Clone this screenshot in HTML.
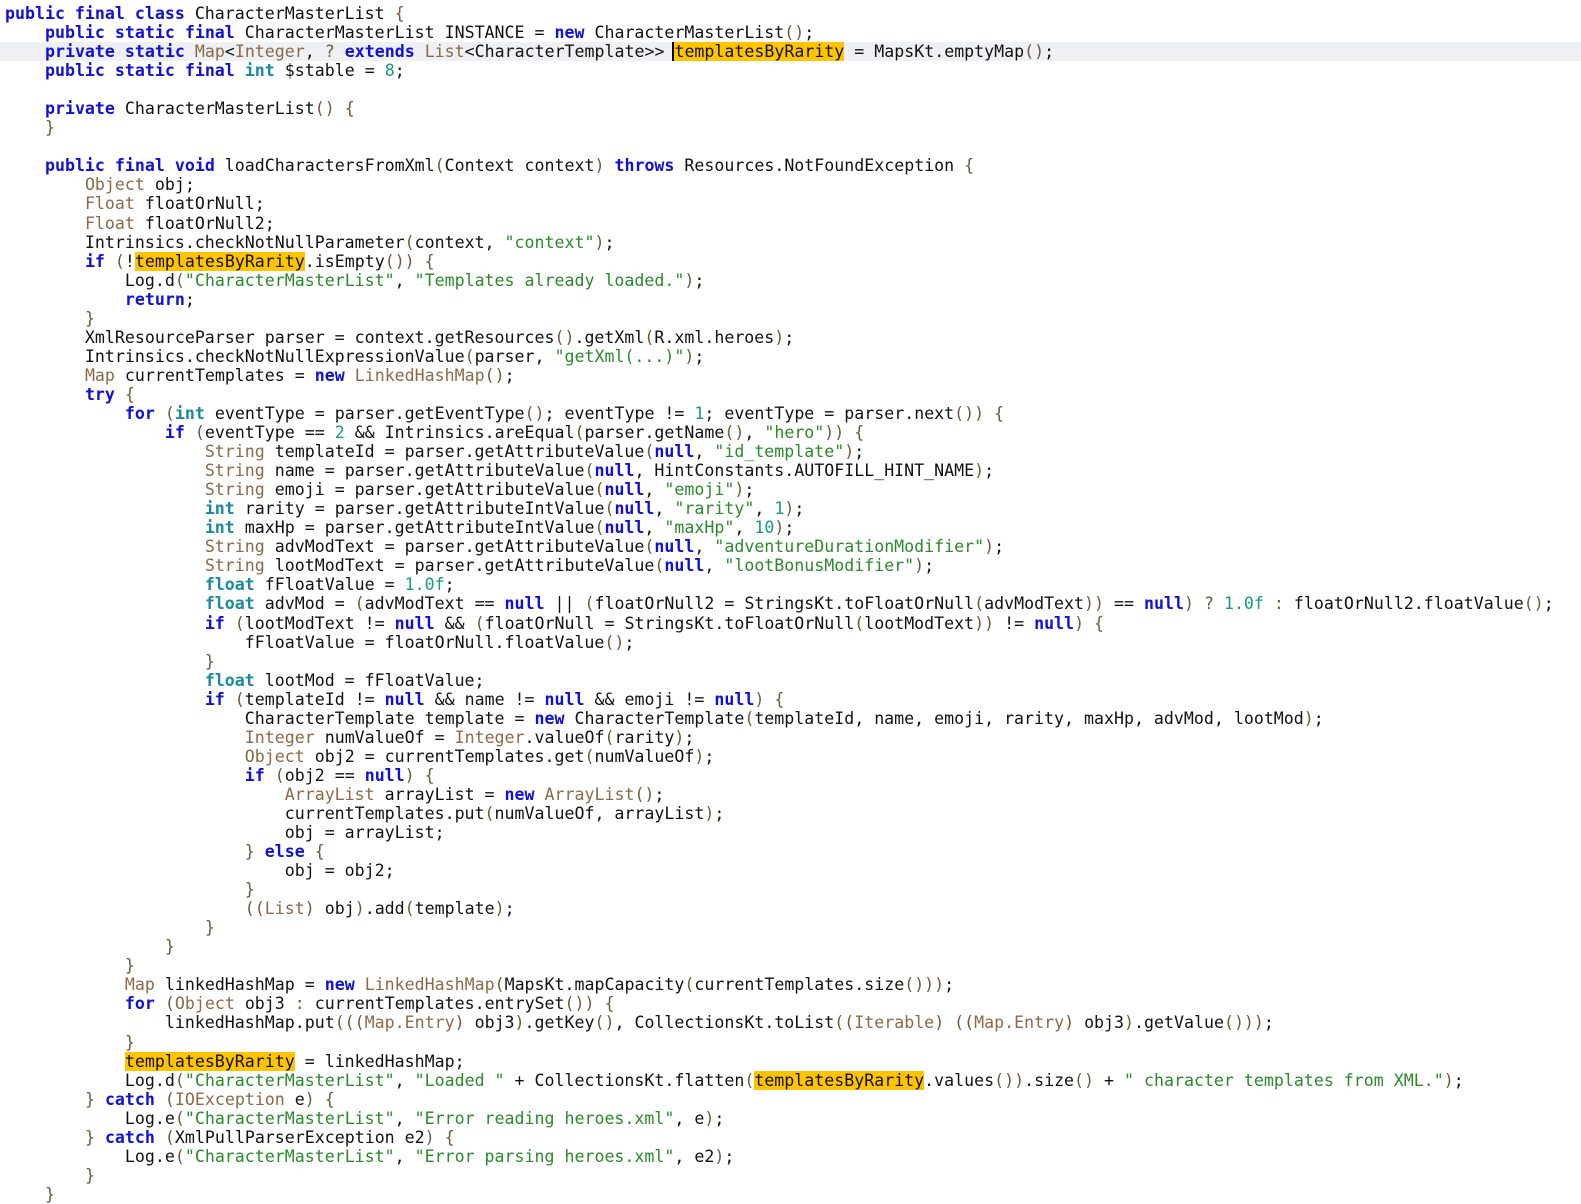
<!DOCTYPE html>
<html><head><meta charset="utf-8"><style>
html,body{margin:0;padding:0;background:#fff;width:1581px;height:1204px;overflow:hidden}
pre{margin:0;padding:4px 0 0 5px;font-family:"DejaVu Sans Mono","Liberation Mono",monospace;font-size:16.6px;line-height:19.04px;color:#111;white-space:pre}
.k{color:#1010d8;font-weight:bold}
.i{color:#1a8aa0;font-weight:bold}
.t{color:#8a6a48}
.s{color:#2a8a2a}
.n{color:#169a86}
.p{color:#6a5a40}
.h{background:#ffc400}
.cur{display:block;background:#eef0f3;margin-left:-5px;padding-left:5px;width:1600px}
.c{border-left:2px solid #000;margin-left:-2px}
</style></head><body><pre><span class="k">public final class</span> CharacterMasterList <span class="p">{</span>
    <span class="k">public static final</span> CharacterMasterList INSTANCE = <span class="k">new</span> CharacterMasterList<span class="p">()</span>;
<span class="cur">    <span class="k">private static</span> <span class="t">Map</span>&lt;<span class="t">Integer</span>, <span class="p">?</span> <span class="k">extends</span> <span class="t">List</span>&lt;CharacterTemplate&gt;&gt; <span class="h c">templatesByRarity</span> = MapsKt.emptyMap<span class="p">()</span>;</span>    <span class="k">public static final</span> <span class="i">int</span> $stable = <span class="n">8</span>;

    <span class="k">private</span> CharacterMasterList<span class="p">() {</span>
    <span class="p">}</span>

    <span class="k">public final void</span> loadCharactersFromXml<span class="p">(</span>Context context<span class="p">)</span> <span class="k">throws</span> Resources.NotFoundException <span class="p">{</span>
        <span class="t">Object</span> obj;
        <span class="t">Float</span> floatOrNull;
        <span class="t">Float</span> floatOrNull2;
        Intrinsics.checkNotNullParameter<span class="p">(</span>context, <span class="s">"context"</span><span class="p">)</span>;
        <span class="k">if</span> <span class="p">(</span>!<span class="h">templatesByRarity</span>.isEmpty<span class="p">()) {</span>
            Log.d<span class="p">(</span><span class="s">"CharacterMasterList"</span>, <span class="s">"Templates already loaded."</span><span class="p">)</span>;
            <span class="k">return</span>;
        <span class="p">}</span>
        XmlResourceParser parser = context.getResources<span class="p">()</span>.getXml<span class="p">(</span>R.xml.heroes<span class="p">)</span>;
        Intrinsics.checkNotNullExpressionValue<span class="p">(</span>parser, <span class="s">"getXml(...)"</span><span class="p">)</span>;
        <span class="t">Map</span> currentTemplates = <span class="k">new</span> <span class="t">LinkedHashMap</span><span class="p">()</span>;
        <span class="k">try</span> <span class="p">{</span>
            <span class="k">for</span> <span class="p">(</span><span class="i">int</span> eventType = parser.getEventType<span class="p">()</span>; eventType != <span class="n">1</span>; eventType = parser.next<span class="p">()) {</span>
                <span class="k">if</span> <span class="p">(</span>eventType == <span class="n">2</span> &amp;&amp; Intrinsics.areEqual<span class="p">(</span>parser.getName<span class="p">()</span>, <span class="s">"hero"</span><span class="p">)) {</span>
                    <span class="t">String</span> templateId = parser.getAttributeValue<span class="p">(</span><span class="k">null</span>, <span class="s">"id_template"</span><span class="p">)</span>;
                    <span class="t">String</span> name = parser.getAttributeValue<span class="p">(</span><span class="k">null</span>, HintConstants.AUTOFILL_HINT_NAME<span class="p">)</span>;
                    <span class="t">String</span> emoji = parser.getAttributeValue<span class="p">(</span><span class="k">null</span>, <span class="s">"emoji"</span><span class="p">)</span>;
                    <span class="i">int</span> rarity = parser.getAttributeIntValue<span class="p">(</span><span class="k">null</span>, <span class="s">"rarity"</span>, <span class="n">1</span><span class="p">)</span>;
                    <span class="i">int</span> maxHp = parser.getAttributeIntValue<span class="p">(</span><span class="k">null</span>, <span class="s">"maxHp"</span>, <span class="n">10</span><span class="p">)</span>;
                    <span class="t">String</span> advModText = parser.getAttributeValue<span class="p">(</span><span class="k">null</span>, <span class="s">"adventureDurationModifier"</span><span class="p">)</span>;
                    <span class="t">String</span> lootModText = parser.getAttributeValue<span class="p">(</span><span class="k">null</span>, <span class="s">"lootBonusModifier"</span><span class="p">)</span>;
                    <span class="i">float</span> fFloatValue = <span class="n">1.0f</span>;
                    <span class="i">float</span> advMod = <span class="p">(</span>advModText == <span class="k">null</span> || <span class="p">(</span>floatOrNull2 = StringsKt.toFloatOrNull<span class="p">(</span>advModText<span class="p">))</span> == <span class="k">null</span><span class="p">)</span> <span class="p">?</span> <span class="n">1.0f</span> <span class="p">:</span> floatOrNull2.floatValue<span class="p">()</span>;
                    <span class="k">if</span> <span class="p">(</span>lootModText != <span class="k">null</span> &amp;&amp; <span class="p">(</span>floatOrNull = StringsKt.toFloatOrNull<span class="p">(</span>lootModText<span class="p">))</span> != <span class="k">null</span><span class="p">) {</span>
                        fFloatValue = floatOrNull.floatValue<span class="p">()</span>;
                    <span class="p">}</span>
                    <span class="i">float</span> lootMod = fFloatValue;
                    <span class="k">if</span> <span class="p">(</span>templateId != <span class="k">null</span> &amp;&amp; name != <span class="k">null</span> &amp;&amp; emoji != <span class="k">null</span><span class="p">) {</span>
                        CharacterTemplate template = <span class="k">new</span> CharacterTemplate<span class="p">(</span>templateId, name, emoji, rarity, maxHp, advMod, lootMod<span class="p">)</span>;
                        <span class="t">Integer</span> numValueOf = <span class="t">Integer</span>.valueOf<span class="p">(</span>rarity<span class="p">)</span>;
                        <span class="t">Object</span> obj2 = currentTemplates.get<span class="p">(</span>numValueOf<span class="p">)</span>;
                        <span class="k">if</span> <span class="p">(</span>obj2 == <span class="k">null</span><span class="p">) {</span>
                            <span class="t">ArrayList</span> arrayList = <span class="k">new</span> <span class="t">ArrayList</span><span class="p">()</span>;
                            currentTemplates.put<span class="p">(</span>numValueOf, arrayList<span class="p">)</span>;
                            obj = arrayList;
                        <span class="p">}</span> <span class="k">else</span> <span class="p">{</span>
                            obj = obj2;
                        <span class="p">}</span>
                        <span class="p">((</span><span class="t">List</span><span class="p">)</span> obj<span class="p">)</span>.add<span class="p">(</span>template<span class="p">)</span>;
                    <span class="p">}</span>
                <span class="p">}</span>
            <span class="p">}</span>
            <span class="t">Map</span> linkedHashMap = <span class="k">new</span> <span class="t">LinkedHashMap</span><span class="p">(</span>MapsKt.mapCapacity<span class="p">(</span>currentTemplates.size<span class="p">()))</span>;
            <span class="k">for</span> <span class="p">(</span><span class="t">Object</span> obj3 <span class="p">:</span> currentTemplates.entrySet<span class="p">()) {</span>
                linkedHashMap.put<span class="p">(((</span><span class="t">Map.Entry</span><span class="p">)</span> obj3<span class="p">)</span>.getKey<span class="p">()</span>, CollectionsKt.toList<span class="p">((</span><span class="t">Iterable</span><span class="p">) ((</span><span class="t">Map.Entry</span><span class="p">)</span> obj3<span class="p">)</span>.getValue<span class="p">()))</span>;
            <span class="p">}</span>
            <span class="h">templatesByRarity</span> = linkedHashMap;
            Log.d<span class="p">(</span><span class="s">"CharacterMasterList"</span>, <span class="s">"Loaded "</span> + CollectionsKt.flatten<span class="p">(</span><span class="h">templatesByRarity</span>.values<span class="p">())</span>.size<span class="p">()</span> + <span class="s">" character templates from XML."</span><span class="p">)</span>;
        <span class="p">}</span> <span class="k">catch</span> <span class="p">(</span><span class="t">IOException</span> e<span class="p">) {</span>
            Log.e<span class="p">(</span><span class="s">"CharacterMasterList"</span>, <span class="s">"Error reading heroes.xml"</span>, e<span class="p">)</span>;
        <span class="p">}</span> <span class="k">catch</span> <span class="p">(</span>XmlPullParserException e2<span class="p">) {</span>
            Log.e<span class="p">(</span><span class="s">"CharacterMasterList"</span>, <span class="s">"Error parsing heroes.xml"</span>, e2<span class="p">)</span>;
        <span class="p">}</span>
    <span class="p">}</span>
</pre></body></html>
